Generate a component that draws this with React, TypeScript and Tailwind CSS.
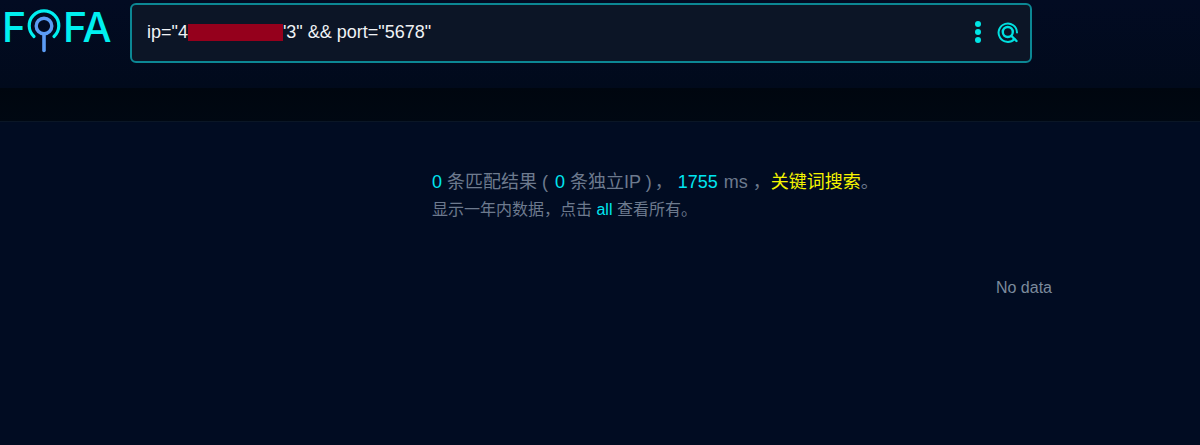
const cjk = "font-['Liberation_Sans','Noto_Sans_CJK_SC',sans-serif]"

function LogoRing() {
  return (
    <svg width="34" height="46" viewBox="0 0 34 46" fill="none" className="shrink-0">
      <path d="M7 28.5A14.8 14.8 0 1 1 27 28.5" stroke="#00f0f0" strokeWidth="3.2" strokeLinecap="round" />
      <circle cx="17" cy="18" r="7.8" stroke="#5b9cf5" strokeWidth="3.4" />
      <path d="M17 26V42.5" stroke="#5b9cf5" strokeWidth="3.6" strokeLinecap="round" />
    </svg>
  )
}

function SearchIcon() {
  return (
    <svg width="22" height="22" viewBox="0 0 22 22" fill="none">
      <path d="M17.5 18A9.2 9.2 0 1 1 20 11.5" stroke="#00e0e0" strokeWidth="2" strokeLinecap="round" />
      <circle cx="10.8" cy="11" r="5" stroke="#00e0e0" strokeWidth="2.4" />
      <path d="M14.5 15L19.5 20" stroke="#00e0e0" strokeWidth="2.4" strokeLinecap="round" />
    </svg>
  )
}

export default function App() {
  return (
    <div className={`h-[445px] w-[1200px] overflow-hidden bg-[#010c22] ${cjk}`}>
      <header className="h-[88px] bg-gradient-to-b from-[#020b22] to-[#010a1c]">
        <div className="flex items-start pt-[3px]">
          <div className="flex h-[52px] w-[130px] items-start pl-[2px] pt-[1px] text-[#00f0f0] font-['Inter',sans-serif] font-medium text-[41px] leading-[46px]">
            <span className="w-[25px]">F</span>
            <div className="mt-[4px]"><LogoRing /></div>
            <span className="ml-[2px] tracking-[-1px]">FA</span>
          </div>
          <div className="flex h-[60px] w-[902px] items-center justify-between rounded-[6px] border-2 border-[#0c8794] bg-[#0c1526] pb-[2px] pl-[15px] pr-[11px]">
            <div className="flex items-center text-[18px] text-[#f0f2f5]">
              <span>ip="4</span>
              <span className="h-[17px] w-[95px] bg-[#95001c]" />
              <span className="mr-[1px]">'3" &amp;&amp; port="5678"</span>
            </div>
            <div className="flex items-center gap-[16px]">
              <div className="flex flex-col gap-[2px]">
                <span className="h-[6px] w-[6px] rounded-full bg-[#00e5e5]" />
                <span className="h-[6px] w-[6px] rounded-full bg-[#00e5e5]" />
                <span className="h-[6px] w-[6px] rounded-full bg-[#00e5e5]" />
              </div>
              <SearchIcon />
            </div>
          </div>
        </div>
      </header>
      <div className="h-[34px] border-b border-[#0a1626] bg-gradient-to-b from-[#00060f] to-[#000812]" />
      <main className="pl-[432px] pt-[48px]">
        <p className="text-[18px] leading-[24px] text-[#6d7a8e]">
          <span className="text-[#00e5f0]">0</span> 条匹配结果 <span className="mr-[2px]">(</span> <span className="text-[#00e5f0]">0</span> 条独立IP <span className="mr-[3px]">)</span>， <span className="mr-[1px] text-[#00e5f0]">1755</span> ms ，<span className="text-[#f5f500]">关键词搜索</span>。
        </p>
        <p className="mt-[5px] text-[16px] leading-[22px] text-[#6d7a8e]">
          显示一年内数据，点击 <span className="text-[#00e5f0]">all</span> 查看所有。
        </p>
        <div className="mt-[56px] pr-[148px] text-right text-[16px] leading-[22px] text-[#7b8a9c]">No data</div>
      </main>
    </div>
  )
}
